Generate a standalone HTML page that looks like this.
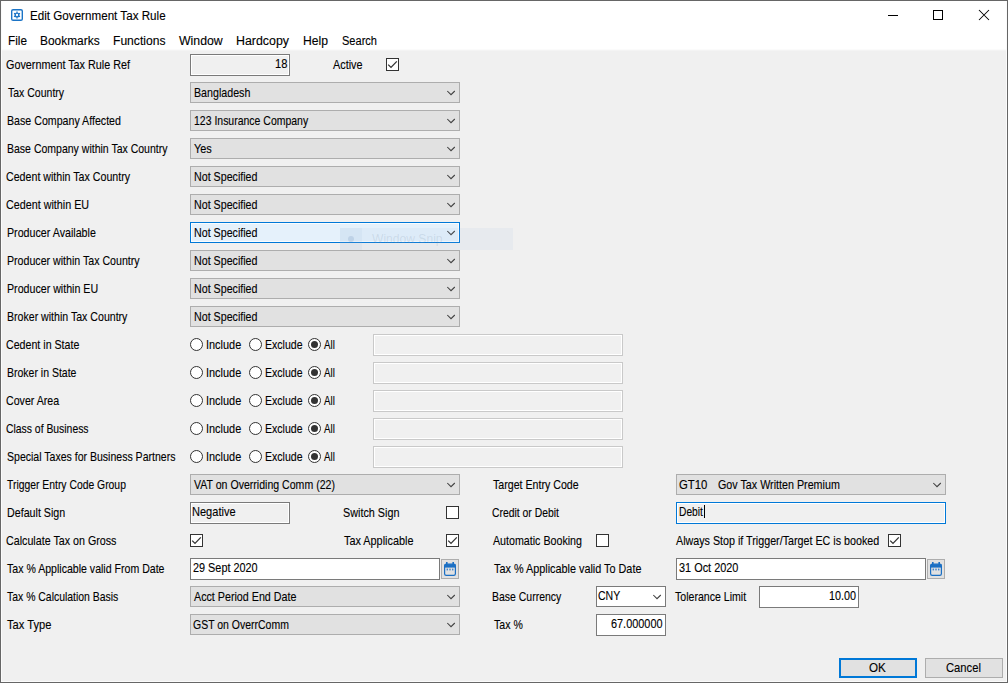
<!DOCTYPE html>
<html><head><meta charset="utf-8"><title>Edit Government Tax Rule</title>
<style>
html,body{margin:0;padding:0;}
body{width:1008px;height:683px;overflow:hidden;background:#f0f0f0;font-family:"Liberation Sans",sans-serif;position:relative;}
#win{position:absolute;left:0;top:0;width:1008px;height:683px;box-sizing:border-box;border:1px solid #666;background:#f0f0f0;}
#win>*{position:absolute;}
#inner{left:0;top:0;width:1004px;height:680px;border:1px solid #fbfbfb;border-top:none;pointer-events:none;}
#title{left:0;top:0;width:1006px;height:48px;background:#fff;}
#sep{left:0;top:48px;width:1006px;height:2px;background:linear-gradient(#fbfbfb 50%,#f4f4f4 50%);}
.t{position:absolute;white-space:pre;display:inline-block;line-height:16px;transform-origin:0 50%;-webkit-text-stroke-width:0.12px;}
.combo,.combohot,.combow,.ro,.dis,.edit,.editfocus,.cb,.rd,.calbtn,.btn,.btndef{position:absolute;box-sizing:border-box;}
.combo{background:#e1e1e1;border:1px solid #adadad;}
.combohot{background:#e5f1fb;border:1px solid #0078d7;box-shadow:inset 0 0 0 1px rgba(255,255,255,.75);}
.combow{background:#fff;border:1px solid #7a7a7a;}
.chev{position:absolute;right:3px;top:7px;}
.ro{background:#f0f0f0;border:1px solid #7a7a7a;box-shadow:inset 0 0 0 1px #fff;}
.dis{background:#f0f0f0;border:1px solid #c9c9c9;box-shadow:inset 0 0 0 1px #fff;}
.edit{background:#fff;border:1px solid #7a7a7a;}
.editfocus{background:#f0f0f0;border:1px solid #0078d7;box-shadow:inset 0 0 0 1px #fff;}
.cb{background:#fff;border:1px solid #333;}
.cb svg{position:absolute;left:-1px;top:-1px;}
.rd{background:#fff;border:1px solid #333;border-radius:50%;}
.rd i{position:absolute;left:2px;top:2px;width:7px;height:7px;border-radius:50%;background:#333;}
.calbtn{background:#e1e1e1;border:1px solid #adadad;}
.calbtn svg{position:absolute;left:2px;top:2px;}
.btn{background:#e1e1e1;border:1px solid #adadad;}
.btndef{background:#e1e1e1;border:2px solid #0078d7;}
#snip{left:340px;top:228px;width:173px;height:22px;background:rgba(150,185,225,0.095);}
#snip b{position:absolute;left:0;top:0;width:22px;height:22px;background:rgba(150,180,215,0.10);}
#snip i{position:absolute;left:8px;top:8px;width:6px;height:6px;border-radius:50%;background:rgba(150,175,205,0.35);}
</style></head><body>
<div id="win">
<div id="title"></div><div id="sep"></div>

<div id="page" style="position:absolute;left:-1px;top:-1px;width:1008px;height:683px">
<svg class="t" style="left:11px;top:9px" width="12" height="12" viewBox="0 0 13 13"><rect x="0.75" y="0.75" width="11.5" height="11.5" rx="1.5" fill="#fff" stroke="#1b74c6" stroke-width="1.5"/><g fill="none" stroke="#1b74c6"><circle cx="6.5" cy="6.5" r="2" stroke-width="1.5"/><path d="M6.5 2.8v1.2M6.5 9v1.2M3.3 4.65l1.05.6M8.65 7.75l1.05.6M3.3 8.35l1.05-.6M8.65 5.25l1.05-.6" stroke-width="1.4"/></g></svg>
<svg class="t" style="left:880px;top:5px" width="120" height="22" viewBox="0 0 120 22" shape-rendering="crispEdges"><rect x="8" y="10" width="10" height="1" fill="#000"/><rect x="53.5" y="5.5" width="9" height="9" fill="none" stroke="#000" stroke-width="1"/><g shape-rendering="auto" stroke="#000" stroke-width="1.05"><path d="M99 5 L109 15 M109 5 L99 15"/></g></svg>
<div class="ro" style="left:190px;top:54px;width:100px;height:22px"></div>
<div class="cb" style="left:386px;top:58px;width:13px;height:13px"><svg width="13" height="13" viewBox="0 0 13 13"><polyline points="2.2,6.6 5,9.4 10.8,3.4" fill="none" stroke="#333" stroke-width="1.3"/></svg></div>
<div class="combo" style="left:190px;top:82px;width:270px;height:21px"><svg class="chev" width="10" height="6" viewBox="0 0 10 6"><polyline points="1.3,1 5,4.7 8.8,1" fill="none" stroke="#404040" stroke-width="1.05"/></svg></div>
<div class="combo" style="left:190px;top:110px;width:270px;height:21px"><svg class="chev" width="10" height="6" viewBox="0 0 10 6"><polyline points="1.3,1 5,4.7 8.8,1" fill="none" stroke="#404040" stroke-width="1.05"/></svg></div>
<div class="combo" style="left:190px;top:138px;width:270px;height:21px"><svg class="chev" width="10" height="6" viewBox="0 0 10 6"><polyline points="1.3,1 5,4.7 8.8,1" fill="none" stroke="#404040" stroke-width="1.05"/></svg></div>
<div class="combo" style="left:190px;top:166px;width:270px;height:21px"><svg class="chev" width="10" height="6" viewBox="0 0 10 6"><polyline points="1.3,1 5,4.7 8.8,1" fill="none" stroke="#404040" stroke-width="1.05"/></svg></div>
<div class="combo" style="left:190px;top:194px;width:270px;height:21px"><svg class="chev" width="10" height="6" viewBox="0 0 10 6"><polyline points="1.3,1 5,4.7 8.8,1" fill="none" stroke="#404040" stroke-width="1.05"/></svg></div>
<div class="combohot" style="left:190px;top:222px;width:270px;height:21px"><svg class="chev" width="10" height="6" viewBox="0 0 10 6"><polyline points="1.3,1 5,4.7 8.8,1" fill="none" stroke="#404040" stroke-width="1.05"/></svg></div>
<div class="combo" style="left:190px;top:250px;width:270px;height:21px"><svg class="chev" width="10" height="6" viewBox="0 0 10 6"><polyline points="1.3,1 5,4.7 8.8,1" fill="none" stroke="#404040" stroke-width="1.05"/></svg></div>
<div class="combo" style="left:190px;top:278px;width:270px;height:21px"><svg class="chev" width="10" height="6" viewBox="0 0 10 6"><polyline points="1.3,1 5,4.7 8.8,1" fill="none" stroke="#404040" stroke-width="1.05"/></svg></div>
<div class="combo" style="left:190px;top:306px;width:270px;height:21px"><svg class="chev" width="10" height="6" viewBox="0 0 10 6"><polyline points="1.3,1 5,4.7 8.8,1" fill="none" stroke="#404040" stroke-width="1.05"/></svg></div>
<div id="snip" style="position:absolute"><b></b><i></i></div>
<span class="t " style="left:371.5px;transform-origin:0 50%;top:231px;font-size:13px;line-height:16px;transform:scaleX(0.93);color:rgba(120,140,165,0.19);">Window Snip</span>
<div class="rd" style="left:190px;top:338px;width:13px;height:13px"></div>
<div class="rd" style="left:249px;top:338px;width:13px;height:13px"></div>
<div class="rd" style="left:308px;top:338px;width:13px;height:13px"><i></i></div>
<div class="dis" style="left:373px;top:334px;width:250px;height:22px"></div>
<div class="rd" style="left:190px;top:366px;width:13px;height:13px"></div>
<div class="rd" style="left:249px;top:366px;width:13px;height:13px"></div>
<div class="rd" style="left:308px;top:366px;width:13px;height:13px"><i></i></div>
<div class="dis" style="left:373px;top:362px;width:250px;height:22px"></div>
<div class="rd" style="left:190px;top:394px;width:13px;height:13px"></div>
<div class="rd" style="left:249px;top:394px;width:13px;height:13px"></div>
<div class="rd" style="left:308px;top:394px;width:13px;height:13px"><i></i></div>
<div class="dis" style="left:373px;top:390px;width:250px;height:22px"></div>
<div class="rd" style="left:190px;top:422px;width:13px;height:13px"></div>
<div class="rd" style="left:249px;top:422px;width:13px;height:13px"></div>
<div class="rd" style="left:308px;top:422px;width:13px;height:13px"><i></i></div>
<div class="dis" style="left:373px;top:418px;width:250px;height:22px"></div>
<div class="rd" style="left:190px;top:450px;width:13px;height:13px"></div>
<div class="rd" style="left:249px;top:450px;width:13px;height:13px"></div>
<div class="rd" style="left:308px;top:450px;width:13px;height:13px"><i></i></div>
<div class="dis" style="left:373px;top:446px;width:250px;height:22px"></div>
<div class="combo" style="left:190px;top:474px;width:270px;height:21px"><svg class="chev" width="10" height="6" viewBox="0 0 10 6"><polyline points="1.3,1 5,4.7 8.8,1" fill="none" stroke="#404040" stroke-width="1.05"/></svg></div>
<div class="combo" style="left:676px;top:474px;width:270px;height:21px"><svg class="chev" width="10" height="6" viewBox="0 0 10 6"><polyline points="1.3,1 5,4.7 8.8,1" fill="none" stroke="#404040" stroke-width="1.05"/></svg></div>
<div class="ro" style="left:190px;top:502px;width:100px;height:22px"></div>
<div class="cb" style="left:446px;top:506px;width:13px;height:13px"></div>
<div class="editfocus" style="left:676px;top:502px;width:270px;height:22px"></div>
<div style="position:absolute;left:704px;top:505px;width:1px;height:13px;background:#000"></div>
<div class="cb" style="left:190px;top:534px;width:13px;height:13px"><svg width="13" height="13" viewBox="0 0 13 13"><polyline points="2.2,6.6 5,9.4 10.8,3.4" fill="none" stroke="#333" stroke-width="1.3"/></svg></div>
<div class="cb" style="left:446px;top:534px;width:13px;height:13px"><svg width="13" height="13" viewBox="0 0 13 13"><polyline points="2.2,6.6 5,9.4 10.8,3.4" fill="none" stroke="#333" stroke-width="1.3"/></svg></div>
<div class="cb" style="left:596px;top:534px;width:13px;height:13px"></div>
<div class="cb" style="left:888px;top:534px;width:13px;height:13px"><svg width="13" height="13" viewBox="0 0 13 13"><polyline points="2.2,6.6 5,9.4 10.8,3.4" fill="none" stroke="#333" stroke-width="1.3"/></svg></div>
<div class="edit" style="left:190px;top:558px;width:250px;height:22px"></div>
<div class="calbtn" style="left:441px;top:559px;width:18px;height:20px"><svg width="12" height="14" viewBox="0 0 12 14"><rect x="2" y="0" width="1.6" height="3" fill="#1a6fc4"/><rect x="8.4" y="0" width="1.6" height="3" fill="#1a6fc4"/><rect x="0.6" y="2.2" width="10.8" height="11.2" rx="1.6" fill="none" stroke="#1a6fc4" stroke-width="1.2"/><rect x="0.6" y="2.2" width="10.8" height="3.4" fill="#1a6fc4"/><rect x="2.6" y="6.6" width="1.4" height="1.8" fill="#3f86cf"/><rect x="5.3" y="6.6" width="1.4" height="1.8" fill="#3f86cf"/><rect x="8" y="6.6" width="1.4" height="1.8" fill="#3f86cf"/></svg></div>
<div class="edit" style="left:676px;top:558px;width:250px;height:22px"></div>
<div class="calbtn" style="left:927px;top:559px;width:18px;height:20px"><svg width="12" height="14" viewBox="0 0 12 14"><rect x="2" y="0" width="1.6" height="3" fill="#1a6fc4"/><rect x="8.4" y="0" width="1.6" height="3" fill="#1a6fc4"/><rect x="0.6" y="2.2" width="10.8" height="11.2" rx="1.6" fill="none" stroke="#1a6fc4" stroke-width="1.2"/><rect x="0.6" y="2.2" width="10.8" height="3.4" fill="#1a6fc4"/><rect x="2.6" y="6.6" width="1.4" height="1.8" fill="#3f86cf"/><rect x="5.3" y="6.6" width="1.4" height="1.8" fill="#3f86cf"/><rect x="8" y="6.6" width="1.4" height="1.8" fill="#3f86cf"/></svg></div>
<div class="combo" style="left:190px;top:586px;width:270px;height:21px"><svg class="chev" width="10" height="6" viewBox="0 0 10 6"><polyline points="1.3,1 5,4.7 8.8,1" fill="none" stroke="#404040" stroke-width="1.05"/></svg></div>
<div class="combow" style="left:596px;top:586px;width:70px;height:21px"><svg class="chev" width="10" height="6" viewBox="0 0 10 6"><polyline points="1.3,1 5,4.7 8.8,1" fill="none" stroke="#404040" stroke-width="1.05"/></svg></div>
<div class="edit" style="left:759px;top:586px;width:100px;height:22px"></div>
<div class="combo" style="left:190px;top:614px;width:270px;height:21px"><svg class="chev" width="10" height="6" viewBox="0 0 10 6"><polyline points="1.3,1 5,4.7 8.8,1" fill="none" stroke="#404040" stroke-width="1.05"/></svg></div>
<div class="edit" style="left:596px;top:614px;width:70px;height:22px"></div>
<div class="btndef" style="left:839px;top:658px;width:78px;height:20px"></div>
<div class="btn" style="left:925px;top:658px;width:78px;height:20px"></div>
<span class="t" style="left:6.28px;top:57px;font-size:13px;transform:scaleX(0.8306);color:#000">Government Tax Rule Ref</span>
<span class="t" style="left:7.55px;top:85px;font-size:13px;transform:scaleX(0.808);color:#000">Tax Country</span>
<span class="t" style="left:6.93px;top:113px;font-size:13px;transform:scaleX(0.8182);color:#000">Base Company Affected</span>
<span class="t" style="left:6.69px;top:141px;font-size:13px;transform:scaleX(0.8086);color:#000">Base Company within Tax Country</span>
<span class="t" style="left:6.14px;top:169px;font-size:13px;transform:scaleX(0.8192);color:#000">Cedent within Tax Country</span>
<span class="t" style="left:6.13px;top:197px;font-size:13px;transform:scaleX(0.8278);color:#000">Cedent within EU</span>
<span class="t" style="left:6.68px;top:225px;font-size:13px;transform:scaleX(0.8216);color:#000">Producer Available</span>
<span class="t" style="left:6.68px;top:253px;font-size:13px;transform:scaleX(0.8171);color:#000">Producer within Tax Country</span>
<span class="t" style="left:6.68px;top:281px;font-size:13px;transform:scaleX(0.8192);color:#000">Producer within EU</span>
<span class="t" style="left:6.69px;top:309px;font-size:13px;transform:scaleX(0.8143);color:#000">Broker within Tax Country</span>
<span class="t" style="left:6.14px;top:337px;font-size:13px;transform:scaleX(0.8187);color:#000">Cedent in State</span>
<span class="t" style="left:6.69px;top:365px;font-size:13px;transform:scaleX(0.8077);color:#000">Broker in State</span>
<span class="t" style="left:6.14px;top:393px;font-size:13px;transform:scaleX(0.8171);color:#000">Cover Area</span>
<span class="t" style="left:6.15px;top:421px;font-size:13px;transform:scaleX(0.799);color:#000">Class of Business</span>
<span class="t" style="left:6.89px;top:449px;font-size:13px;transform:scaleX(0.8102);color:#000">Special Taxes for Business Partners</span>
<span class="t" style="left:7.3px;top:477px;font-size:13px;transform:scaleX(0.7976);color:#000">Trigger Entry Code Group</span>
<span class="t" style="left:6.68px;top:505px;font-size:13px;transform:scaleX(0.8225);color:#000">Default Sign</span>
<span class="t" style="left:6.13px;top:533px;font-size:13px;transform:scaleX(0.8233);color:#000">Calculate Tax on Gross</span>
<span class="t" style="left:7.3px;top:561px;font-size:13px;transform:scaleX(0.8132);color:#000">Tax % Applicable valid From Date</span>
<span class="t" style="left:7.3px;top:589px;font-size:13px;transform:scaleX(0.8025);color:#000">Tax % Calculation Basis</span>
<span class="t" style="left:7.29px;top:617px;font-size:13px;transform:scaleX(0.8578);color:#000">Tax Type</span>
<span class="t" style="left:30.13px;top:8px;font-size:12px;transform:scaleX(0.97);color:#000">Edit Government Tax Rule</span>
<span class="t" style="left:7.62px;top:33px;font-size:12px;transform:scaleX(0.9803);color:#000">File</span>
<span class="t" style="left:39.71px;top:33px;font-size:12px;transform:scaleX(0.9932);color:#000">Bookmarks</span>
<span class="t" style="left:112.79px;top:33px;font-size:12px;transform:scaleX(1.0079);color:#000">Functions</span>
<span class="t" style="left:179.2px;top:33px;font-size:12px;transform:scaleX(1.0246);color:#000">Window</span>
<span class="t" style="left:236.17px;top:33px;font-size:12px;transform:scaleX(1.0308);color:#000">Hardcopy</span>
<span class="t" style="left:302.58px;top:33px;font-size:12px;transform:scaleX(1.0151);color:#000">Help</span>
<span class="t" style="left:342.04px;top:33px;font-size:12px;transform:scaleX(0.9197);color:#000">Search</span>
<span class="t" style="left:275.39px;top:56px;font-size:13px;transform:scaleX(0.8577);color:#000">18</span>
<span class="t" style="left:333.0px;top:57px;font-size:13px;transform:scaleX(0.8345);color:#000">Active</span>
<span class="t" style="left:193.68px;top:85px;font-size:13px;transform:scaleX(0.8202);color:#000">Bangladesh</span>
<span class="t" style="left:194.19px;top:113px;font-size:13px;transform:scaleX(0.806);color:#000">123 Insurance Company</span>
<span class="t" style="left:193.83px;top:141px;font-size:13px;transform:scaleX(0.8395);color:#000">Yes</span>
<span class="t" style="left:194.18px;top:169px;font-size:13px;transform:scaleX(0.8212);color:#000">Not Specified</span>
<span class="t" style="left:194.18px;top:197px;font-size:13px;transform:scaleX(0.8212);color:#000">Not Specified</span>
<span class="t" style="left:194.18px;top:225px;font-size:13px;transform:scaleX(0.8212);color:#000">Not Specified</span>
<span class="t" style="left:194.18px;top:253px;font-size:13px;transform:scaleX(0.8212);color:#000">Not Specified</span>
<span class="t" style="left:194.18px;top:281px;font-size:13px;transform:scaleX(0.8212);color:#000">Not Specified</span>
<span class="t" style="left:194.18px;top:309px;font-size:13px;transform:scaleX(0.8212);color:#000">Not Specified</span>
<span class="t" style="left:205.55px;top:337px;font-size:13px;transform:scaleX(0.84);color:#000">Include</span>
<span class="t" style="left:264.99px;top:337px;font-size:13px;transform:scaleX(0.8112);color:#000">Exclude</span>
<span class="t" style="left:324.3px;top:337px;font-size:13px;transform:scaleX(0.7481);color:#000">All</span>
<span class="t" style="left:205.55px;top:365px;font-size:13px;transform:scaleX(0.84);color:#000">Include</span>
<span class="t" style="left:264.99px;top:365px;font-size:13px;transform:scaleX(0.8112);color:#000">Exclude</span>
<span class="t" style="left:324.3px;top:365px;font-size:13px;transform:scaleX(0.7481);color:#000">All</span>
<span class="t" style="left:205.55px;top:393px;font-size:13px;transform:scaleX(0.84);color:#000">Include</span>
<span class="t" style="left:264.99px;top:393px;font-size:13px;transform:scaleX(0.8112);color:#000">Exclude</span>
<span class="t" style="left:324.3px;top:393px;font-size:13px;transform:scaleX(0.7481);color:#000">All</span>
<span class="t" style="left:205.55px;top:421px;font-size:13px;transform:scaleX(0.84);color:#000">Include</span>
<span class="t" style="left:264.99px;top:421px;font-size:13px;transform:scaleX(0.8112);color:#000">Exclude</span>
<span class="t" style="left:324.3px;top:421px;font-size:13px;transform:scaleX(0.7481);color:#000">All</span>
<span class="t" style="left:205.55px;top:449px;font-size:13px;transform:scaleX(0.84);color:#000">Include</span>
<span class="t" style="left:264.99px;top:449px;font-size:13px;transform:scaleX(0.8112);color:#000">Exclude</span>
<span class="t" style="left:324.3px;top:449px;font-size:13px;transform:scaleX(0.7481);color:#000">All</span>
<span class="t" style="left:194.05px;top:477px;font-size:13px;transform:scaleX(0.8128);color:#000">VAT on Overriding Comm (22)</span>
<span class="t" style="left:192.4px;top:504px;font-size:13px;transform:scaleX(0.8492);color:#000">Negative</span>
<span class="t" style="left:342.63px;top:505px;font-size:13px;transform:scaleX(0.8302);color:#000">Switch Sign</span>
<span class="t" style="left:343.54px;top:533px;font-size:13px;transform:scaleX(0.8359);color:#000">Tax Applicable</span>
<span class="t" style="left:192.62px;top:560px;font-size:13px;transform:scaleX(0.8355);color:#000">29 Sept 2020</span>
<span class="t" style="left:194.25px;top:589px;font-size:13px;transform:scaleX(0.8242);color:#000">Acct Period End Date</span>
<span class="t" style="left:193.15px;top:617px;font-size:13px;transform:scaleX(0.806);color:#000">GST on OverrComm</span>
<span class="t" style="left:493.05px;top:477px;font-size:13px;transform:scaleX(0.8173);color:#000">Target Entry Code</span>
<span class="t" style="left:492.4px;top:505px;font-size:13px;transform:scaleX(0.7982);color:#000">Credit or Debit</span>
<span class="t" style="left:493.0px;top:533px;font-size:13px;transform:scaleX(0.8209);color:#000">Automatic Booking</span>
<span class="t" style="left:493.54px;top:561px;font-size:13px;transform:scaleX(0.8338);color:#000">Tax % Applicable valid To Date</span>
<span class="t" style="left:492.44px;top:589px;font-size:13px;transform:scaleX(0.8059);color:#000">Base Currency</span>
<span class="t" style="left:493.55px;top:617px;font-size:13px;transform:scaleX(0.8129);color:#000">Tax %</span>
<span class="t" style="left:598.14px;top:588px;font-size:13px;transform:scaleX(0.8095);color:#000">CNY</span>
<span class="t" style="left:611.37px;top:616px;font-size:13px;transform:scaleX(0.8382);color:#000">67.000000</span>
<span class="t" style="left:678.85px;top:477px;font-size:13px;transform:scaleX(0.872);color:#000">GT10</span>
<span class="t" style="left:718.13px;top:477px;font-size:13px;transform:scaleX(0.8253);color:#000">Gov Tax Written Premium</span>
<span class="t" style="left:678.71px;top:504px;font-size:13px;transform:scaleX(0.7863);color:#000">Debit</span>
<span class="t" style="left:675.5px;top:533px;font-size:13px;transform:scaleX(0.8248);color:#000">Always Stop if Trigger/Target EC is booked</span>
<span class="t" style="left:679.08px;top:560px;font-size:13px;transform:scaleX(0.8387);color:#000">31 Oct 2020</span>
<span class="t" style="left:675.3px;top:589px;font-size:13px;transform:scaleX(0.8132);color:#000">Tolerance Limit</span>
<span class="t" style="left:829.17px;top:588px;font-size:13px;transform:scaleX(0.8306);color:#000">10.00</span>
<span class="t" style="left:868.53px;top:660px;font-size:13px;transform:scaleX(0.8958);color:#000">OK</span>
<span class="t" style="left:945.55px;top:660px;font-size:13px;transform:scaleX(0.8645);color:#000">Cancel</span>
</div>
<div id="inner"></div>
</div></body></html>
